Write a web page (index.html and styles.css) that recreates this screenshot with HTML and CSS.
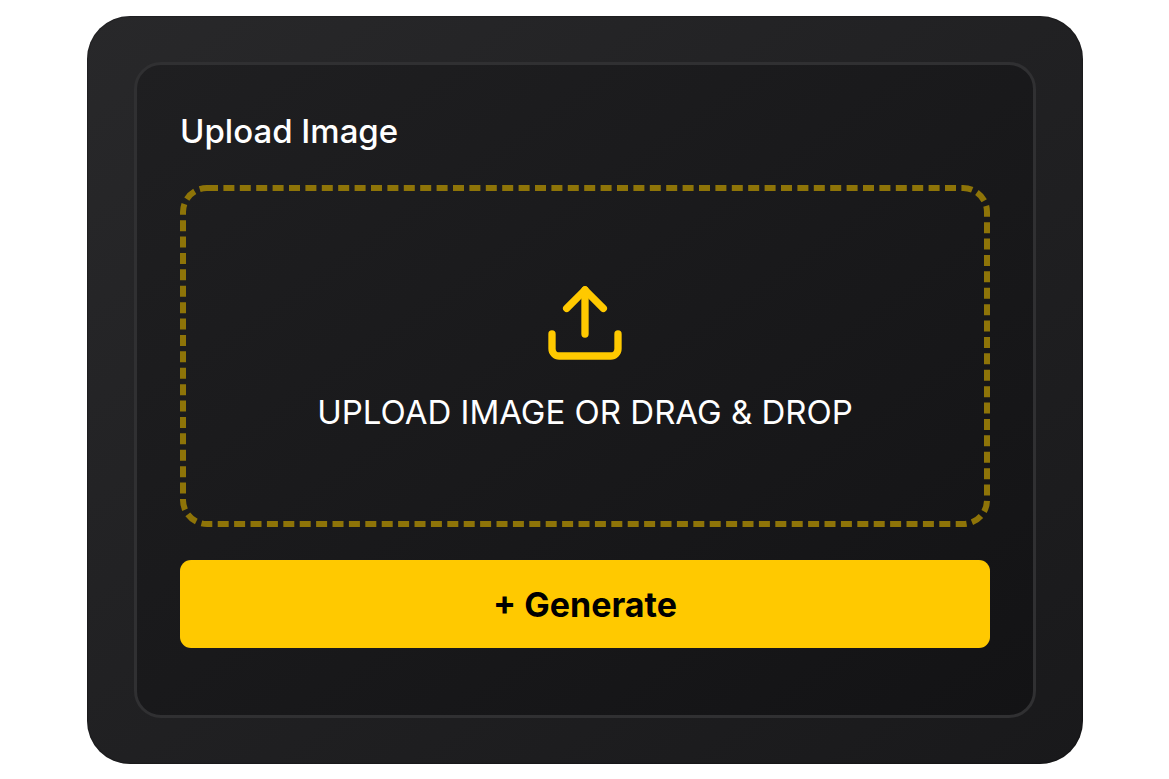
FILE: index.html
```html
<!DOCTYPE html>
<html lang="en">
  <head>
    <meta charset="UTF-8" />
    <meta name="viewport" content="width=device-width, initial-scale=1.0" />
    <title>Upload Image</title>
    <link rel="stylesheet" href="styles.css">
  </head>
  <body>
    <main class="card">
      <form class="panel">
        <h1 class="title">Upload Image</h1>

        <label class="dropzone" for="image">
          <svg class="dropzone-border" aria-hidden="true">
            <rect x="3" y="3" rx="24" />
          </svg>
          <input class="file-input" type="file" id="image" accept="image/*" />
          <svg class="upload-icon" viewBox="0 0 24 24" aria-hidden="true">
            <path d="M21 15v4a2 2 0 0 1-2 2H5a2 2 0 0 1-2-2v-4" />
            <polyline points="17 8 12 3 7 8" />
            <line x1="12" y1="3" x2="12" y2="15" />
          </svg>
          <span class="dropzone-text">UPLOAD IMAGE OR DRAG &amp; DROP</span>
        </label>

        <button class="generate" type="button">+ Generate</button>
      </form>
    </main>
  </body>
</html>
```
FILE: styles.css
```css
* {
  box-sizing: border-box;
}
body {
  margin: 0;
  padding: 16px 86px 15px 87px;
  background-color: #ffffff;
  font-family: "Inter", sans-serif;
}
.card {
  padding: 46px 47px;
  border-radius: 43px;
  background: linear-gradient(145deg, #28282a, #19191b);
  box-shadow: inset 0 0 1px 1px rgba(0, 0, 0, 0.2);
}
.panel {
  display: flex;
  flex-direction: column;
  gap: 33px;
  padding: 46px 43px 67px;
  border: 3px solid #303032;
  border-radius: 27px;
  background: linear-gradient(145deg, #1f1f21, #131315);
}
.title {
  margin: 0 0 1px;
  color: #ffffff;
  font-size: 33px;
  font-weight: 500;
  line-height: 40px;
}
.dropzone {
  position: relative;
  display: flex;
  flex-direction: column;
  align-items: center;
  gap: 25px;
  padding: 94px 24px 95px;
  border-radius: 27px;
  cursor: pointer;
}
/* dashed outline, drawn as svg to control the dash length */
.dropzone-border {
  position: absolute;
  inset: 0;
  width: 100%;
  height: 100%;
}
.dropzone-border rect {
  width: calc(100% - 6px);
  height: calc(100% - 6px);
  fill: none;
  stroke: #8e7408;
  stroke-width: 6px;
  stroke-dasharray: 11 5.4;
}
.file-input {
  position: absolute;
  width: 1px;
  height: 1px;
  opacity: 0;
}
.upload-icon {
  width: 88px;
  height: 88px;
  fill: none;
  stroke: #ffc900;
  stroke-width: 2;
  stroke-linecap: round;
  stroke-linejoin: round;
}
.dropzone-text {
  color: #ffffff;
  font-size: 33px;
  font-weight: 400;
  line-height: 40px;
  text-align: center;
}
.generate {
  height: 88px;
  border: none;
  border-radius: 11px;
  background-color: #ffc900;
  color: #000000;
  font-family: inherit;
  font-size: 34px;
  font-weight: 700;
  cursor: pointer;
}
```
